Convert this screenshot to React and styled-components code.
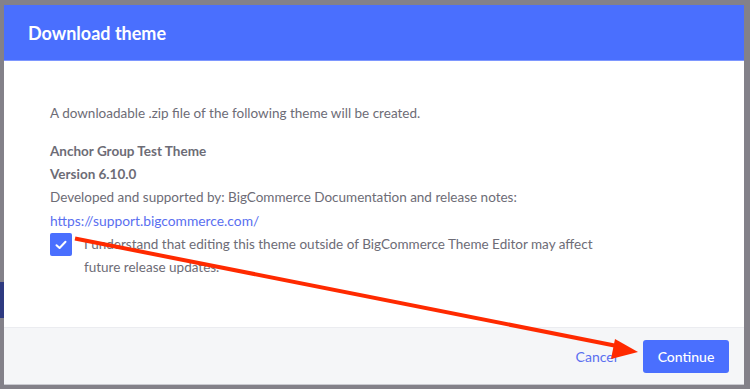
import React from "react";
import styled, { createGlobalStyle } from "styled-components";

const Global = createGlobalStyle`
  html, body { margin: 0; padding: 0; }
  body {
    width: 750px;
    height: 389px;
    overflow: hidden;
    background: #838189;
    font-family: Lato, "Open Sans", sans-serif;
  }
`;

const Page = styled.div`
  position: relative;
  width: 750px;
  height: 389px;
  background: #838189;
  overflow: hidden;
`;

const Underlay = styled.div`
  display: flex;
  flex-direction: column;
  padding-top: 282px;
`;

const UnderButton = styled.div`
  width: 4px;
  height: 36px;
  background: #2e3a80;
`;

const Overlay = styled.div`
  position: absolute;
  inset: 0;
  padding: 5px 6px 4px 4px;
  display: flex;
`;

const Modal = styled.div`
  flex: 1;
  display: flex;
  flex-direction: column;
  background: #fff;
  border-bottom: 1px solid #c9cad0;
`;

const Header = styled.div`
  height: 56px;
  box-sizing: border-box;
  background: #4a6ffe;
  border-bottom: 1px solid #7e97ff;
  display: flex;
  align-items: center;
  padding: 0 24px 0 24px;
`;

const Title = styled.h1`
  margin: 0;
  font-size: 18px;
  font-weight: 700;
  color: #fff;
`;

const Body = styled.div`
  flex: 1;
  padding: 41px 24px 0 46px;
  color: #6d6c76;
  font-size: 13.5px;
  line-height: 23px;
`;

const Para = styled.p`
  margin: 0 0 15px 0;
`;

const Line = styled.div`
  font-weight: ${(p) => (p.$bold ? 700 : 400)};
`;

const Link = styled.a`
  color: #5a6ff0;
  text-decoration: none;
  font-size: 13.8px;
`;

const CheckRow = styled.label`
  display: flex;
  align-items: flex-start;
  gap: 12px;
`;

const Box = styled.span`
  flex: none;
  width: 22px;
  height: 23px;
  background: #4a6ffe;
  border-radius: 2px;
  display: flex;
  align-items: center;
  justify-content: center;
`;

const CheckText = styled.span`
  max-width: 520px;
`;

const Footer = styled.div`
  height: 57px;
  box-sizing: border-box;
  background: #f5f6f8;
  border-top: 1px solid #ebecf0;
  display: flex;
  align-items: center;
  justify-content: flex-end;
  gap: 26px;
  padding: 0 15px 0 0;
`;

const TextButton = styled.button`
  border: none;
  background: none;
  padding: 0;
  font-family: inherit;
  font-size: 14px;
  color: #5a6ff0;
`;

const PrimaryButton = styled.button`
  border: none;
  background: #4a6ffe;
  color: #fff;
  font-family: inherit;
  font-size: 14px;
  font-weight: 500;
  width: 86px;
  height: 33px;
  border-radius: 3px;
`;

const Arrow = styled.svg`
  position: absolute;
  left: 0;
  top: 0;
  pointer-events: none;
`;

export default function App() {
  return (
    <>
      <Global />
      <Page>
        <Underlay>
          <UnderButton />
        </Underlay>
        <Overlay>
          <Modal>
            <Header>
              <Title>Download theme</Title>
            </Header>
            <Body>
              <Para>A downloadable .zip file of the following theme will be created.</Para>
              <Line $bold>Anchor Group Test Theme</Line>
              <Line $bold>Version 6.10.0</Line>
              <Line>Developed and supported by: BigCommerce Documentation and release notes:</Line>
              <Line>
                <Link href="#">https://support.bigcommerce.com/</Link>
              </Line>
              <CheckRow>
                <Box>
                  <svg width="12" height="10" viewBox="0 0 12 10">
                    <path d="M1.5 5.2 L4.6 8 L10.5 1.8" fill="none" stroke="#fff" strokeWidth="2" strokeLinecap="round" strokeLinejoin="round" />
                  </svg>
                </Box>
                <CheckText>
                  I understand that editing this theme outside of BigCommerce Theme Editor may affect future release updates.
                </CheckText>
              </CheckRow>
            </Body>
            <Footer>
              <TextButton>Cancel</TextButton>
              <PrimaryButton>Continue</PrimaryButton>
            </Footer>
          </Modal>
        </Overlay>
        <Arrow width="750" height="389" viewBox="0 0 750 389">
          <line x1="75" y1="238.5" x2="622" y2="347" stroke="#ff2a00" strokeWidth="4" />
          <polygon points="638,352 615,339 611,359" fill="#ff2a00" />
        </Arrow>
      </Page>
    </>
  );
}
